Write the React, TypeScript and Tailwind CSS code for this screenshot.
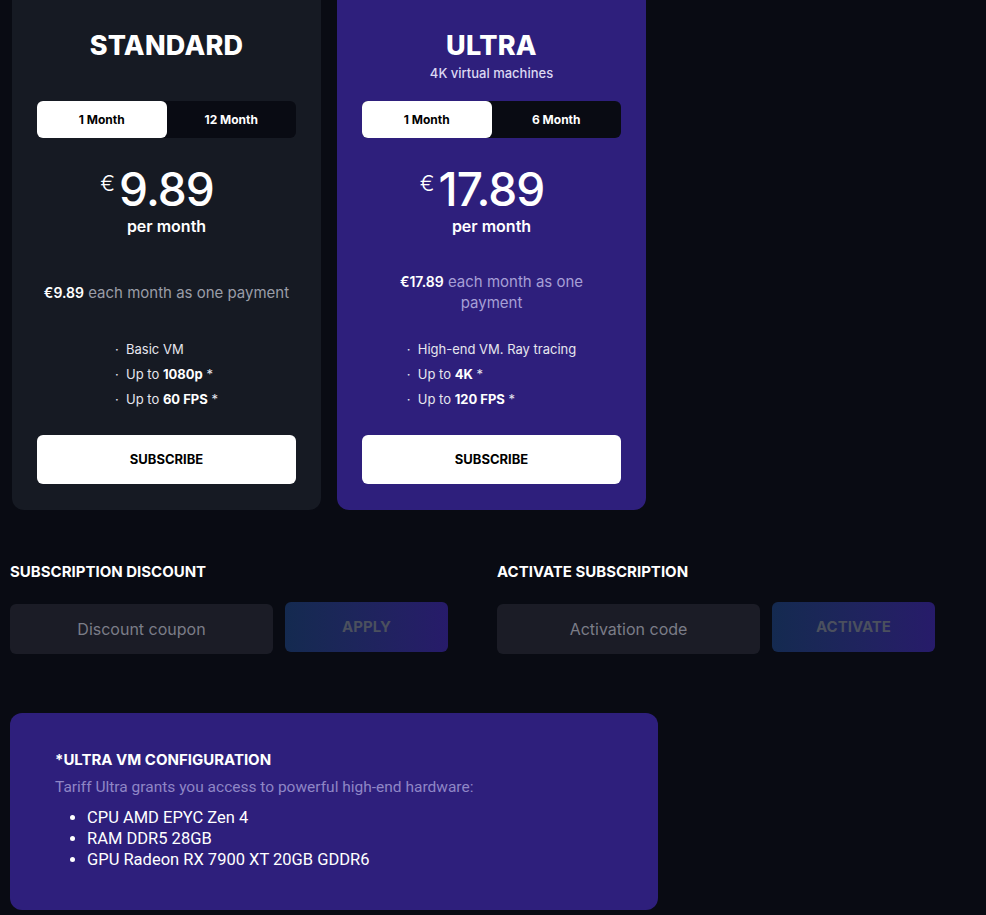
import { useState } from "react";

type Plan = {
  name: string;
  subtitle?: string;
  periods: [string, string];
  price: string;
  features: { text: string; bold?: string }[];
  ultra?: boolean;
};

const plans: Plan[] = [
  {
    name: "STANDARD",
    periods: ["1 Month", "12 Month"],
    price: "9.89",
    features: [{ text: "Basic VM" }, { text: "Up to ", bold: "1080p" }, { text: "Up to ", bold: "60 FPS" }],
  },
  {
    name: "ULTRA",
    subtitle: "4K virtual machines",
    periods: ["1 Month", "6 Month"],
    price: "17.89",
    features: [{ text: "High-end VM. Ray tracing" }, { text: "Up to ", bold: "4K" }, { text: "Up to ", bold: "120 FPS" }],
    ultra: true,
  },
];

function PlanCard({ plan }: { plan: Plan }) {
  const [period, setPeriod] = useState(0);

  return (
    <div className={`flex w-[309px] flex-col rounded-xl px-[25px] pt-[46px] pb-[26px] ${plan.ultra ? "bg-[#2e1f7c]" : "bg-[#161a23]"}`}>
      <div className="flex h-[71px] flex-col items-center">
        <h2 className="text-[27px] leading-[32px] font-extrabold tracking-[0.01em]">{plan.name}</h2>
        {plan.subtitle && <p className="mt-[2px] text-[13px] leading-[18px] font-medium text-[#dcd8f2]">{plan.subtitle}</p>}
      </div>

      <div className="flex h-[37px] rounded-md bg-[#090b13]">
        {plan.periods.map((p, i) => (
          <button
            key={p}
            type="button"
            onClick={() => setPeriod(i)}
            className={`flex-1 rounded-md text-[12px] font-bold ${period === i ? "bg-white text-black" : "text-white"}`}
          >
            {p}
          </button>
        ))}
      </div>

      <div className="mt-[31px] flex justify-center">
        <div className="relative">
          <span className="absolute top-[3px] right-full mr-[4px] text-[22px] leading-[22px] font-light">€</span>
          <span className="block text-[46px] leading-[40px] font-medium tracking-[-0.02em]">{plan.price}</span>
        </div>
      </div>
      <div className="mt-[7px] text-center text-[16px] leading-[20px] font-semibold">per month</div>

      <div className="mt-[11px] flex h-[90px] items-center justify-center text-center text-[15px] leading-[21px]">
        <p className={plan.ultra ? "max-w-[230px] text-[#a69fd6]" : "text-[#9a9da7]"}>
          <span className="text-[14px] font-semibold text-white">€{plan.price}</span> each month as one payment
        </p>
      </div>

      <ul className="mx-auto w-fit text-[13px] leading-[25px] text-[#e6e6ee]">
        {plan.features.map((f) => (
          <li key={f.text + (f.bold ?? "")} className="flex gap-[7px]">
            <span className="w-[4px]">·</span>
            <span>
              {f.text}
              {f.bold && (
                <>
                  <b className="font-bold text-white">{f.bold}</b> *
                </>
              )}
            </span>
          </li>
        ))}
      </ul>

      <button type="button" className="mt-[23px] h-[49px] rounded-md bg-white text-[13px] font-bold text-black">
        SUBSCRIBE
      </button>
    </div>
  );
}

function CodeForm({ title, placeholder, action }: { title: string; placeholder: string; action: string }) {
  return (
    <div className="w-[438px]">
      <h3 className="text-[15px] leading-[20px] font-bold">{title}</h3>
      <div className="mt-[20px] flex gap-[12px]">
        <input
          placeholder={placeholder}
          className="mt-[2px] h-[50px] w-[263px] rounded-md bg-[#1b1c26] text-center text-[16px] text-white outline-none placeholder:text-[#7b7d88]"
        />
        <button
          type="button"
          className="h-[50px] w-[163px] rounded-md bg-gradient-to-r from-[#142a50] to-[#271b6a] text-[15px] font-bold text-[#4b505e]"
        >
          {action}
        </button>
      </div>
    </div>
  );
}

export default function App() {
  return (
    <div className="min-h-screen overflow-hidden bg-[#090b13] font-['Inter',sans-serif] text-white">
      <div className="-mt-[16px] flex gap-[16px] pl-[12px]">
        {plans.map((plan) => (
          <PlanCard key={plan.name} plan={plan} />
        ))}
      </div>

      <div className="mt-[52px] flex gap-[49px] pl-[10px]">
        <CodeForm title="SUBSCRIPTION DISCOUNT" placeholder="Discount coupon" action="APPLY" />
        <CodeForm title="ACTIVATE SUBSCRIPTION" placeholder="Activation code" action="ACTIVATE" />
      </div>

      <div className="mt-[59px] ml-[10px] h-[197px] w-[648px] rounded-xl bg-[#2e1f7c] px-[45px] pt-[37px]">
        <h4 className="text-[15px] leading-[20px] font-bold">*ULTRA VM CONFIGURATION</h4>
        <p className="mt-[7px] font-['Roboto',sans-serif] text-[15.5px] leading-[20px] text-[#8f86c6]">
          Tariff Ultra grants you access to powerful high-end hardware:
        </p>
        <ul className="mt-[10px] list-disc pl-[32px] font-['Roboto',sans-serif] text-[16.5px] leading-[21px]">
          <li>CPU AMD EPYC Zen 4</li>
          <li>RAM DDR5 28GB</li>
          <li>GPU Radeon RX 7900 XT 20GB GDDR6</li>
        </ul>
      </div>
    </div>
  );
}
